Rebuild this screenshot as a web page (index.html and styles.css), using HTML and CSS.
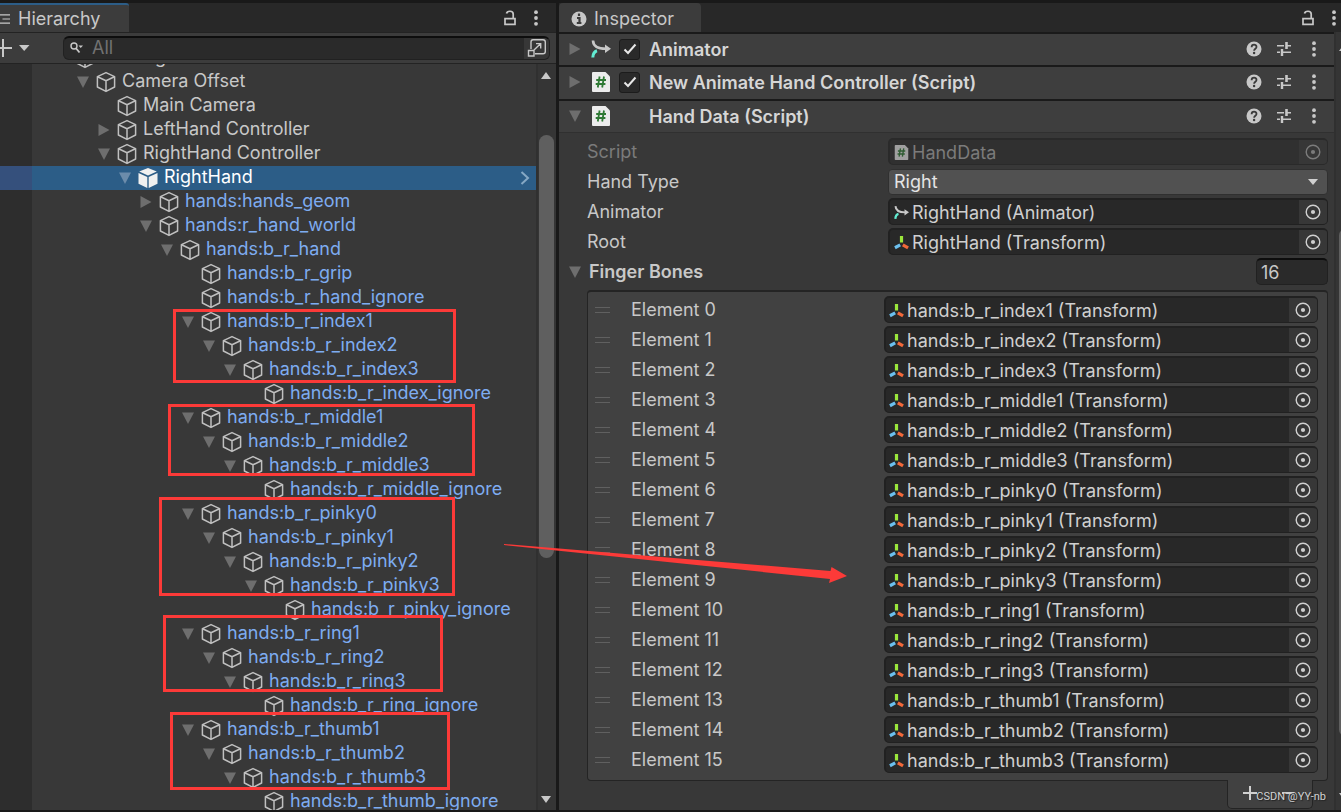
FILE: index.html
```html
<!DOCTYPE html>
<html lang="en">
<head>
<meta charset="utf-8">
<title>Hierarchy and Inspector</title>
<link rel="stylesheet" href="styles.css">
</head>
<body>
<svg class="defs" aria-hidden="true">
  <symbol id="cube" viewBox="0 0 20 22"><path d="M10 1.6 18.6 5.6V16L10 20.4 1.4 16V5.6ZM1.6 5.8 10 9.8 18.4 5.8M10 9.8V20" fill="none" stroke="#c0c0c0" stroke-width="1.5" stroke-linejoin="round"/></symbol>
  <symbol id="cube-solid" viewBox="0 0 20 22"><path d="M10 .9 18.8 4.6 10 8.6 1.2 4.6Z M.5 6 9.3 10V21L.5 16.8Z M19.5 6 10.7 10V21L19.5 16.8Z" fill="#f0f0f0"/></symbol>
  <symbol id="down" viewBox="0 0 12 12"><path d="M0 .5H12L6 12Z" fill="currentColor"/></symbol>
  <symbol id="right" viewBox="0 0 12 12"><path d="M.5 0V12L11.5 6Z" fill="currentColor"/></symbol>
  <symbol id="lock" viewBox="0 0 14 16"><path d="M2 8.6H12V14.3H2ZM3.5 3.5C4 .5 10.2.3 10.2 4V8.5" fill="none" stroke="#c8c8c8" stroke-width="1.7"/></symbol>
  <symbol id="dots" viewBox="0 0 6 16"><g fill="#c8c8c8"><circle cx="3" cy="2.2" r="1.9"/><circle cx="3" cy="8" r="1.9"/><circle cx="3" cy="13.8" r="1.9"/></g></symbol>
  <symbol id="help" viewBox="0 0 16 16"><circle cx="8" cy="8" r="7.5" fill="#c8c8c8"/><path d="M5.6 6.2C5.6 2.8 10.6 3 10.5 6 10.4 7.7 8.1 7.8 8.1 9.8" fill="none" stroke="#3a3a3a" stroke-width="1.8"/><circle cx="8.1" cy="12" r="1.2" fill="#3a3a3a"/></symbol>
  <symbol id="preset" viewBox="0 0 16 16"><path d="M1 4.7H8M10.500 1V8M11 4.7H15M1 11.3H4M6 8V15M7 11.3H15" fill="none" stroke="#c8c8c8" stroke-width="1.6"/><path d="M10.5 1V8M6 8V15" stroke="#c8c8c8" stroke-width="2.4"/></symbol>
  <symbol id="script" viewBox="0 0 18 20"><path d="M1 0H13.5L18 4.5V19Q18 20 17 20H1Q0 20 0 19V1Q0 0 1 0Z" fill="#ececec"/><path d="M7.6 4.5 5.8 15.5M12 4.5 10.2 15.5M4.2 8H14M3.7 12H13.4" stroke="#2f7a35" stroke-width="1.8" fill="none"/></symbol>
  <symbol id="animator" viewBox="0 0 20 20"><path d="M2 1.500C2.200 7.500 7 9.800 15 9.800" fill="none" stroke="#c8c8c8" stroke-width="2.600"/><path d="M14 5.500 20 9.800 14 14Z" fill="#c8c8c8"/><path d="M1.800 18.500C2 15 3.500 12.500 6 11.800" fill="none" stroke="#62ecd2" stroke-width="3"/></symbol>
  <symbol id="transform" viewBox="0 0 16 16"><g fill="none" stroke-width="3.400"><path d="M8 1V8" stroke="#9be63c"/><path d="M6.600 10.600 1 13.600" stroke="#6cc0ee"/><path d="M9.400 10.600 15 13.800" stroke="#f0683a"/></g></symbol>
  <symbol id="target" viewBox="0 0 16 16"><circle cx="8" cy="8" r="6.8" fill="none" stroke="currentColor" stroke-width="1.4"/><circle cx="8" cy="8" r="2.1" fill="currentColor"/></symbol>
</svg>

<div class="editor">
  <section class="panel hierarchy" aria-label="Hierarchy">
    <header class="tabbar">
      <div class="tab tab-focused"><svg class="ic-list" viewBox="0 0 12 12"><path d="M0 1H12M3 6H12M0 11H12" stroke="#c8c8c8" stroke-width="1.400"/></svg>Hierarchy</div>
      <div class="tabtools">
        <button aria-label="Lock"><svg class="ic-lock"><use href="#lock"/></svg></button>
        <button aria-label="Menu"><svg class="ic-dots"><use href="#dots"/></svg></button>
      </div>
    </header>
    <div class="toolbar">
      <button class="create" aria-label="Create"><svg viewBox="0 0 30 18"><path d="M3 0V18M0 9H12" stroke="#c8c8c8" stroke-width="2"/><path d="M19 6H29.500L24.200 12Z" fill="#c8c8c8"/></svg></button>
      <div class="search">
        <svg class="ic-search" viewBox="0 0 13 12"><circle cx="4" cy="4" r="3" fill="none" stroke="#c8c8c8" stroke-width="1.400"/><path d="M6 6.200 9.500 10.500" stroke="#c8c8c8" stroke-width="1.800"/><path d="M8.500 3.500H13L10.700 6Z" fill="#c8c8c8"/></svg>
        <input type="text" placeholder="All" aria-label="Search hierarchy">
        <button class="picker" aria-label="Open in search"><svg class="ic-open" viewBox="0 0 20 20"><path d="M4 11V4Q4 1.700 6 1.700H16Q18.300 1.700 18.300 4V13.500Q18.300 15.800 16 15.800H8" fill="none" stroke="#c8c8c8" stroke-width="1.400"/><path d="M1.500 12.500H7V18H1.500ZM7 12 13.500 5.800M9 5.600H13.700V10.500" fill="none" stroke="#c8c8c8" stroke-width="1.400"/></svg></button>
      </div>
    </div>
    <div class="treewrap">
      <ul class="tree">
        <li style="--depth:0"><svg class="fold"><use href="#down"/></svg><svg class="cube"><use href="#cube"/></svg>XR Origin</li>
        <li style="--depth:1"><svg class="fold"><use href="#down"/></svg><svg class="cube"><use href="#cube"/></svg>Camera Offset</li>
        <li style="--depth:2"><svg class="fold"></svg><svg class="cube"><use href="#cube"/></svg>Main Camera</li>
        <li style="--depth:2"><svg class="fold"><use href="#right"/></svg><svg class="cube"><use href="#cube"/></svg>LeftHand Controller</li>
        <li style="--depth:2"><svg class="fold"><use href="#down"/></svg><svg class="cube"><use href="#cube"/></svg>RightHand Controller</li>
        <li class="selected" style="--depth:3"><svg class="fold"><use href="#down"/></svg><svg class="cube"><use href="#cube-solid"/></svg>RightHand<svg class="chevron" viewBox="0 0 10 14"><path d="M1.500 1 8 7 1.500 13" fill="none" stroke="#86a8c4" stroke-width="2"/></svg></li>
        <li class="prefab" style="--depth:4"><svg class="fold"><use href="#right"/></svg><svg class="cube"><use href="#cube"/></svg>hands:hands_geom</li>
        <li class="prefab" style="--depth:4"><svg class="fold"><use href="#down"/></svg><svg class="cube"><use href="#cube"/></svg>hands:r_hand_world</li>
        <li class="prefab" style="--depth:5"><svg class="fold"><use href="#down"/></svg><svg class="cube"><use href="#cube"/></svg>hands:b_r_hand</li>
        <li class="prefab" style="--depth:6"><svg class="fold"></svg><svg class="cube"><use href="#cube"/></svg>hands:b_r_grip</li>
        <li class="prefab" style="--depth:6"><svg class="fold"></svg><svg class="cube"><use href="#cube"/></svg>hands:b_r_hand_ignore</li>
        <li class="prefab" style="--depth:6"><svg class="fold"><use href="#down"/></svg><svg class="cube"><use href="#cube"/></svg>hands:b_r_index1</li>
        <li class="prefab" style="--depth:7"><svg class="fold"><use href="#down"/></svg><svg class="cube"><use href="#cube"/></svg>hands:b_r_index2</li>
        <li class="prefab" style="--depth:8"><svg class="fold"><use href="#down"/></svg><svg class="cube"><use href="#cube"/></svg>hands:b_r_index3</li>
        <li class="prefab" style="--depth:9"><svg class="fold"></svg><svg class="cube"><use href="#cube"/></svg>hands:b_r_index_ignore</li>
        <li class="prefab" style="--depth:6"><svg class="fold"><use href="#down"/></svg><svg class="cube"><use href="#cube"/></svg>hands:b_r_middle1</li>
        <li class="prefab" style="--depth:7"><svg class="fold"><use href="#down"/></svg><svg class="cube"><use href="#cube"/></svg>hands:b_r_middle2</li>
        <li class="prefab" style="--depth:8"><svg class="fold"><use href="#down"/></svg><svg class="cube"><use href="#cube"/></svg>hands:b_r_middle3</li>
        <li class="prefab" style="--depth:9"><svg class="fold"></svg><svg class="cube"><use href="#cube"/></svg>hands:b_r_middle_ignore</li>
        <li class="prefab" style="--depth:6"><svg class="fold"><use href="#down"/></svg><svg class="cube"><use href="#cube"/></svg>hands:b_r_pinky0</li>
        <li class="prefab" style="--depth:7"><svg class="fold"><use href="#down"/></svg><svg class="cube"><use href="#cube"/></svg>hands:b_r_pinky1</li>
        <li class="prefab" style="--depth:8"><svg class="fold"><use href="#down"/></svg><svg class="cube"><use href="#cube"/></svg>hands:b_r_pinky2</li>
        <li class="prefab" style="--depth:9"><svg class="fold"><use href="#down"/></svg><svg class="cube"><use href="#cube"/></svg>hands:b_r_pinky3</li>
        <li class="prefab" style="--depth:10"><svg class="fold"></svg><svg class="cube"><use href="#cube"/></svg>hands:b_r_pinky_ignore</li>
        <li class="prefab" style="--depth:6"><svg class="fold"><use href="#down"/></svg><svg class="cube"><use href="#cube"/></svg>hands:b_r_ring1</li>
        <li class="prefab" style="--depth:7"><svg class="fold"><use href="#down"/></svg><svg class="cube"><use href="#cube"/></svg>hands:b_r_ring2</li>
        <li class="prefab" style="--depth:8"><svg class="fold"><use href="#down"/></svg><svg class="cube"><use href="#cube"/></svg>hands:b_r_ring3</li>
        <li class="prefab" style="--depth:9"><svg class="fold"></svg><svg class="cube"><use href="#cube"/></svg>hands:b_r_ring_ignore</li>
        <li class="prefab" style="--depth:6"><svg class="fold"><use href="#down"/></svg><svg class="cube"><use href="#cube"/></svg>hands:b_r_thumb1</li>
        <li class="prefab" style="--depth:7"><svg class="fold"><use href="#down"/></svg><svg class="cube"><use href="#cube"/></svg>hands:b_r_thumb2</li>
        <li class="prefab" style="--depth:8"><svg class="fold"><use href="#down"/></svg><svg class="cube"><use href="#cube"/></svg>hands:b_r_thumb3</li>
        <li class="prefab" style="--depth:9"><svg class="fold"></svg><svg class="cube"><use href="#cube"/></svg>hands:b_r_thumb_ignore</li>
      </ul>
      <div class="scrollbar">
        <svg class="arrow" viewBox="0 0 10 7"><path d="M0 7H10L5 0Z" fill="#c8c8c8"/></svg>
        <div class="track"><div class="thumb"></div></div>
        <svg class="arrow" viewBox="0 0 10 7"><path d="M0 0H10L5 7Z" fill="#c8c8c8"/></svg>
      </div>
    </div>
  </section>

  <section class="panel inspector" aria-label="Inspector">
    <header class="tabbar">
      <div class="tab"><svg class="ic-info" viewBox="0 0 16 16"><circle cx="8" cy="8" r="7.500" fill="#c8c8c8"/><path d="M8 2.500V5M6 7H8.500V12M5.800 12H10.400" stroke="#3c3c3c" stroke-width="2.200" fill="none"/></svg>Inspector</div>
      <div class="tabtools">
        <button aria-label="Lock"><svg class="ic-lock"><use href="#lock"/></svg></button>
        <button aria-label="Menu"><svg class="ic-dots"><use href="#dots"/></svg></button>
      </div>
    </header>
    <div class="inspwrap">
      <div class="components">
        <div class="component">
          <svg class="fold"><use href="#right"/></svg><svg class="ic-comp"><use href="#animator"/></svg>
          <label class="enable"><input type="checkbox" checked aria-label="Enable Animator"><svg viewBox="0 0 14 12"><path d="M1.500 6.500 5 10 12.500 1.500" fill="none" stroke="#e8e8e8" stroke-width="2"/></svg></label>
          <h2>Animator</h2>
          <button aria-label="Help"><svg class="ic16"><use href="#help"/></svg></button><button aria-label="Presets"><svg class="ic16"><use href="#preset"/></svg></button><button aria-label="Menu"><svg class="ic-dots"><use href="#dots"/></svg></button>
        </div>
        <div class="component">
          <svg class="fold"><use href="#right"/></svg><svg class="ic-comp"><use href="#script"/></svg>
          <label class="enable"><input type="checkbox" checked aria-label="Enable New Animate Hand Controller"><svg viewBox="0 0 14 12"><path d="M1.500 6.500 5 10 12.500 1.500" fill="none" stroke="#e8e8e8" stroke-width="2"/></svg></label>
          <h2>New Animate Hand Controller (Script)</h2>
          <button aria-label="Help"><svg class="ic16"><use href="#help"/></svg></button><button aria-label="Presets"><svg class="ic16"><use href="#preset"/></svg></button><button aria-label="Menu"><svg class="ic-dots"><use href="#dots"/></svg></button>
        </div>
        <div class="component">
          <svg class="fold"><use href="#down"/></svg><svg class="ic-comp"><use href="#script"/></svg>
          <span class="enable-space"></span>
          <h2>Hand Data (Script)</h2>
          <button aria-label="Help"><svg class="ic16"><use href="#help"/></svg></button><button aria-label="Presets"><svg class="ic16"><use href="#preset"/></svg></button><button aria-label="Menu"><svg class="ic-dots"><use href="#dots"/></svg></button>
        </div>

        <div class="props">
          <div class="prop disabled"><span>Script</span><div class="object"><svg class="ic-obj"><use href="#script"/></svg><span>HandData</span><button class="picker" disabled aria-label="Select script"><svg class="ic16"><use href="#target"/></svg></button></div></div>
          <div class="prop"><label for="handtype">Hand Type</label><div class="dropdown"><select id="handtype"><option>Right</option><option>Left</option></select><svg class="caret" viewBox="0 0 10 6"><path d="M0 0H10L5 6Z" fill="#d0d0d0"/></svg></div></div>
          <div class="prop"><span>Animator</span><div class="object"><svg class="ic-obj"><use href="#animator"/></svg><span>RightHand (Animator)</span><button class="picker" aria-label="Select animator"><svg class="ic16"><use href="#target"/></svg></button></div></div>
          <div class="prop"><span>Root</span><div class="object"><svg class="ic-obj"><use href="#transform"/></svg><span>RightHand (Transform)</span><button class="picker" aria-label="Select root"><svg class="ic16"><use href="#target"/></svg></button></div></div>
        </div>
        <div class="listhead"><svg class="fold"><use href="#down"/></svg><label for="size">Finger Bones</label><input id="size" type="text" value="16"></div>
        <ul class="bones">
          <li><i class="grip"></i><span>Element 0</span><div class="object"><svg class="ic-obj"><use href="#transform"/></svg><span>hands:b_r_index1 (Transform)</span><button class="picker" aria-label="Select"><svg class="ic16"><use href="#target"/></svg></button></div></li>
          <li><i class="grip"></i><span>Element 1</span><div class="object"><svg class="ic-obj"><use href="#transform"/></svg><span>hands:b_r_index2 (Transform)</span><button class="picker" aria-label="Select"><svg class="ic16"><use href="#target"/></svg></button></div></li>
          <li><i class="grip"></i><span>Element 2</span><div class="object"><svg class="ic-obj"><use href="#transform"/></svg><span>hands:b_r_index3 (Transform)</span><button class="picker" aria-label="Select"><svg class="ic16"><use href="#target"/></svg></button></div></li>
          <li><i class="grip"></i><span>Element 3</span><div class="object"><svg class="ic-obj"><use href="#transform"/></svg><span>hands:b_r_middle1 (Transform)</span><button class="picker" aria-label="Select"><svg class="ic16"><use href="#target"/></svg></button></div></li>
          <li><i class="grip"></i><span>Element 4</span><div class="object"><svg class="ic-obj"><use href="#transform"/></svg><span>hands:b_r_middle2 (Transform)</span><button class="picker" aria-label="Select"><svg class="ic16"><use href="#target"/></svg></button></div></li>
          <li><i class="grip"></i><span>Element 5</span><div class="object"><svg class="ic-obj"><use href="#transform"/></svg><span>hands:b_r_middle3 (Transform)</span><button class="picker" aria-label="Select"><svg class="ic16"><use href="#target"/></svg></button></div></li>
          <li><i class="grip"></i><span>Element 6</span><div class="object"><svg class="ic-obj"><use href="#transform"/></svg><span>hands:b_r_pinky0 (Transform)</span><button class="picker" aria-label="Select"><svg class="ic16"><use href="#target"/></svg></button></div></li>
          <li><i class="grip"></i><span>Element 7</span><div class="object"><svg class="ic-obj"><use href="#transform"/></svg><span>hands:b_r_pinky1 (Transform)</span><button class="picker" aria-label="Select"><svg class="ic16"><use href="#target"/></svg></button></div></li>
          <li><i class="grip"></i><span>Element 8</span><div class="object"><svg class="ic-obj"><use href="#transform"/></svg><span>hands:b_r_pinky2 (Transform)</span><button class="picker" aria-label="Select"><svg class="ic16"><use href="#target"/></svg></button></div></li>
          <li><i class="grip"></i><span>Element 9</span><div class="object"><svg class="ic-obj"><use href="#transform"/></svg><span>hands:b_r_pinky3 (Transform)</span><button class="picker" aria-label="Select"><svg class="ic16"><use href="#target"/></svg></button></div></li>
          <li><i class="grip"></i><span>Element 10</span><div class="object"><svg class="ic-obj"><use href="#transform"/></svg><span>hands:b_r_ring1 (Transform)</span><button class="picker" aria-label="Select"><svg class="ic16"><use href="#target"/></svg></button></div></li>
          <li><i class="grip"></i><span>Element 11</span><div class="object"><svg class="ic-obj"><use href="#transform"/></svg><span>hands:b_r_ring2 (Transform)</span><button class="picker" aria-label="Select"><svg class="ic16"><use href="#target"/></svg></button></div></li>
          <li><i class="grip"></i><span>Element 12</span><div class="object"><svg class="ic-obj"><use href="#transform"/></svg><span>hands:b_r_ring3 (Transform)</span><button class="picker" aria-label="Select"><svg class="ic16"><use href="#target"/></svg></button></div></li>
          <li><i class="grip"></i><span>Element 13</span><div class="object"><svg class="ic-obj"><use href="#transform"/></svg><span>hands:b_r_thumb1 (Transform)</span><button class="picker" aria-label="Select"><svg class="ic16"><use href="#target"/></svg></button></div></li>
          <li><i class="grip"></i><span>Element 14</span><div class="object"><svg class="ic-obj"><use href="#transform"/></svg><span>hands:b_r_thumb2 (Transform)</span><button class="picker" aria-label="Select"><svg class="ic16"><use href="#target"/></svg></button></div></li>
          <li><i class="grip"></i><span>Element 15</span><div class="object"><svg class="ic-obj"><use href="#transform"/></svg><span>hands:b_r_thumb3 (Transform)</span><button class="picker" aria-label="Select"><svg class="ic16"><use href="#target"/></svg></button></div></li>
        </ul>
        <div class="listfoot">
          <button aria-label="Add element"><svg class="ic16" viewBox="0 0 16 16"><path d="M8 1V15M1 8H15" stroke="#d0d0d0" stroke-width="2"/></svg></button>
          <button aria-label="Remove element"><svg class="ic16" viewBox="0 0 16 16"><path d="M2 8H14" stroke="#d0d0d0" stroke-width="2"/></svg></button>
        </div>
      </div>
      <div class="edge"><svg class="arrow" viewBox="0 0 10 7"><path d="M0 7H10L5 0Z" fill="#c8c8c8"/></svg><div class="track"><div class="thumb"></div></div><svg class="arrow" viewBox="0 0 10 7"><path d="M0 0H10L5 7Z" fill="#c8c8c8"/></svg></div>
    </div>
  </section>
</div>

<svg class="marks" width="1341" height="812" aria-hidden="true">
  <g fill="none" stroke="#fc3a38" stroke-width="3">
    <rect x="174.500" y="310.500" width="280" height="71"/>
    <rect x="169.500" y="405.500" width="304" height="69"/>
    <rect x="160.500" y="498.500" width="293" height="96"/>
    <rect x="164.500" y="616.500" width="277" height="74"/>
    <rect x="171.500" y="713.500" width="277" height="75"/>
  </g>
  <path d="M504 544 830.500 571 831.500 567 847 576 829 583 830 579 504 545Z" fill="#fc3a38"/>
</svg>
<div class="watermark">CSDN @YY-nb</div>
</body>
</html>
```

FILE: styles.css
```css
* { box-sizing: border-box; }

body {
  margin: 0;
  background: #191919;
  color: #c8c8c8;
  font: 18px/24px Inter, "Liberation Sans", sans-serif;
  overflow: hidden;
}

button, input, select { font: inherit; color: inherit; }
button { background: none; border: 0; padding: 0; display: flex; align-items: center; justify-content: center; }
ul { list-style: none; margin: 0; padding: 0; }
svg { flex: none; display: block; }
h2 { font-size: 18px; font-weight: 600; margin: 0; flex: 1; color: #d6d6d6; white-space: nowrap; }

.defs { position: absolute; width: 0; height: 0; }
.editor { display: flex; gap: 3px; height: 100vh; padding: 3px 0 2px; }
.panel { display: flex; flex-direction: column; min-width: 0; background: #383838; }
.hierarchy { flex: 556 1 0; }
.inspector { flex: 782 1 0; }

/* Tabs */
.tabbar { display: flex; justify-content: space-between; height: 29px; background: #282828; flex: none; }
.tab { display: flex; align-items: center; background: #3c3c3c; padding-top: 2px; }
.hierarchy .tab { width: 129px; gap: 8px; border-top: 2px solid #2c5d87; border-radius: 0 3px 0 0; padding-top: 0; }
.inspector .tab { width: 142px; gap: 7px; padding-left: 12px; border-radius: 4px 4px 0 0; }
.tabtools { display: flex; align-items: center; gap: 16px; padding-right: 17px; }
.inspector .tabtools { padding-right: 4px; }
.ic-list { width: 10px; height: 12px; }
.ic-info { width: 16px; height: 16px; }
.ic-lock { width: 14px; height: 16px; }
.ic-dots { width: 6px; height: 16px; }
.ic16 { width: 16px; height: 16px; }

/* Hierarchy toolbar */
.toolbar { display: flex; align-items: center; justify-content: space-between; height: 32px; background: #3c3c3c; border-top: 1px solid #232323; border-bottom: 1px solid #232323; flex: none; padding: 0 6px 1px 0; }
.create { width: 63px; justify-content: flex-start; }
.create svg { width: 30px; height: 18px; }
.search { flex: 1; display: flex; align-items: center; height: 24px; background: #2a2a2a; border: 1px solid #212121; border-top: 2px solid #0d0d0d; border-radius: 6px; padding-left: 6px; overflow: hidden; }
.search input { flex: 1; min-width: 0; background: none; border: 0; padding: 0; margin-left: 9px; height: 22px; outline: 0; }
.search input::placeholder { color: #727272; opacity: 1; }
.search .picker { width: 25px; }
.ic-search { width: 13px; height: 12px; }
.ic-open { width: 20px; height: 20px; }

/* Tree */
.treewrap { flex: 1; display: flex; min-height: 0; }
.tree { flex: 1; min-width: 0; overflow: hidden; display: flex; flex-direction: column; background: linear-gradient(90deg, #2d2d2d 32px, #383838 32px); }
.tree li { display: flex; align-items: center; height: 24px; flex: none; padding: 0 6px 2px calc(56px + var(--depth) * 21px); white-space: nowrap; }
.tree li:first-child { margin-top: -18px; }
.fold { width: 12px; height: 12px; color: #6e6e6e; }
.tree .fold { margin-top: 2px; }
.cube { width: 20px; height: 22px; margin: 2px 6px 0 7px; }
.prefab { color: #7eacf1; }
.selected { background: linear-gradient(90deg, #35507c 32px, #2c5d87 32px); color: #fff; }
.selected .fold { color: #6c8cab; }
.chevron { width: 10px; height: 14px; margin-left: auto; margin-top: 2px; }

.scrollbar { width: 20px; display: flex; flex-direction: column; align-items: center; background: #353535; border-left: 2px solid #303030; padding: 8px 2px 7px 0; }
.arrow { width: 10px; height: 7px; }
.track { flex: 1; width: 15px; padding: 56px 0 0; }
.track .thumb { height: 64%; border-radius: 8px; background: #5f5f5f; }

/* Inspector */
.inspwrap { flex: 1; display: flex; min-height: 0; }
.components { flex: 1; min-width: 0; overflow: hidden; }
.component { display: flex; align-items: center; height: 33px; border-top: 2px solid #1a1a1a; background: #3e3e3e; padding: 0 17px 1px 10px; }
.component h2 { padding-top: 1px; }
.component:nth-child(3) { height: 34px; border-bottom: 1px solid #303030; }
.component:nth-child(2) { height: 34px; padding-bottom: 2px; }
.component button { margin-left: 14px; }
.component button:last-child { margin-left: 19px; }
.ic-comp { width: 20px; height: 20px; margin-left: 10px; }
.enable { display: grid; width: 21px; height: 21px; margin: 0 9px 0 8px; }
.enable-space { width: 38px; }
.enable input { appearance: none; grid-area: 1 / 1; margin: 0; background: #2a2a2a; border: 1px solid #1c1c1c; border-radius: 3px; }
.enable svg { grid-area: 1 / 1; width: 14px; height: 12px; place-self: center; visibility: hidden; pointer-events: none; }
.enable input:checked + svg { visibility: visible; }

.props { display: grid; gap: 3px; padding: 5px 6px 0 28px; }
.prop { display: grid; grid-template-columns: 301fr 440fr; align-items: center; height: 27px; }
.object { display: flex; align-items: center; height: 27px; min-width: 0; background: #282828; border: 2px solid #212121; border-right-width: 1px; border-bottom-width: 1px; border-radius: 5px; padding-left: 4px; color: #d0d0d0; overflow: hidden; }
.object span { flex: 1; white-space: nowrap; margin-left: 3px; padding-top: 1px; }
.ic-obj { width: 15px; height: 15px; }
.picker { width: 28px; align-self: stretch; background: #373737; }
.disabled { color: #7b7b7b; }
.disabled .object { background: #303030; border-color: #2a2a2a; color: #7b7b7b; }
.disabled .ic-obj { opacity: .6; }
.dropdown { display: grid; align-items: center; height: 26px; }
.dropdown select { grid-area: 1 / 1; appearance: none; height: 26px; background: #515151; border: 1px solid #303030; border-radius: 4px; color: #e4e4e4; padding: 0 5px; }
.caret { grid-area: 1 / 1; justify-self: end; width: 10px; height: 6px; margin-right: 10px; pointer-events: none; }

.listhead { display: flex; align-items: center; height: 33px; padding: 0 6px 0 10px; }
.listhead label { flex: 1; font-weight: 600; margin-left: 8px; padding-top: 1px; }
.listhead input { width: 72px; height: 27px; background: #2a2a2a; border: 1px solid #212121; border-top: 2px solid #0d0d0d; border-radius: 5px; padding: 0 4px; }
.bones { display: grid; gap: 3px; margin: 2px 6px 0 28px; padding: 4px 9px 7px 7px; background: #414141; border: 1px solid #242424; border-top-width: 2px; border-radius: 4px; }
.bones li { display: grid; grid-template-columns: 36px 253fr 434fr; align-items: center; height: 27px; }
.bones .object { padding-left: 3px; }
.bones .picker { padding-right: 1px; }
.grip { width: 15px; height: 6px; border: solid #606060; border-width: 1px 0; }
.listfoot { display: flex; justify-content: space-between; width: 86px; height: 29px; margin: -1px 21px 0 auto; background: #414141; border: 1px solid #242424; border-top: 0; border-radius: 0 0 5px 5px; position: relative; padding: 0 16px 3px 14px; }

.edge { width: 7px; overflow: hidden; background: #353535; border-left: 2px solid #303030; display: flex; flex-direction: column; align-items: flex-start; padding: 12px 0 10px 3px; }
.edge .track { padding-top: 177px; }
.edge .thumb { height: 90%; }

/* Overlays */
.marks { position: absolute; left: 0; top: 0; pointer-events: none; }
.watermark { position: absolute; right: 15px; bottom: 8px; font: 11px/14px Roboto, sans-serif; color: #d2d2d2; text-shadow: 1px 1px 1px #222; }
```
